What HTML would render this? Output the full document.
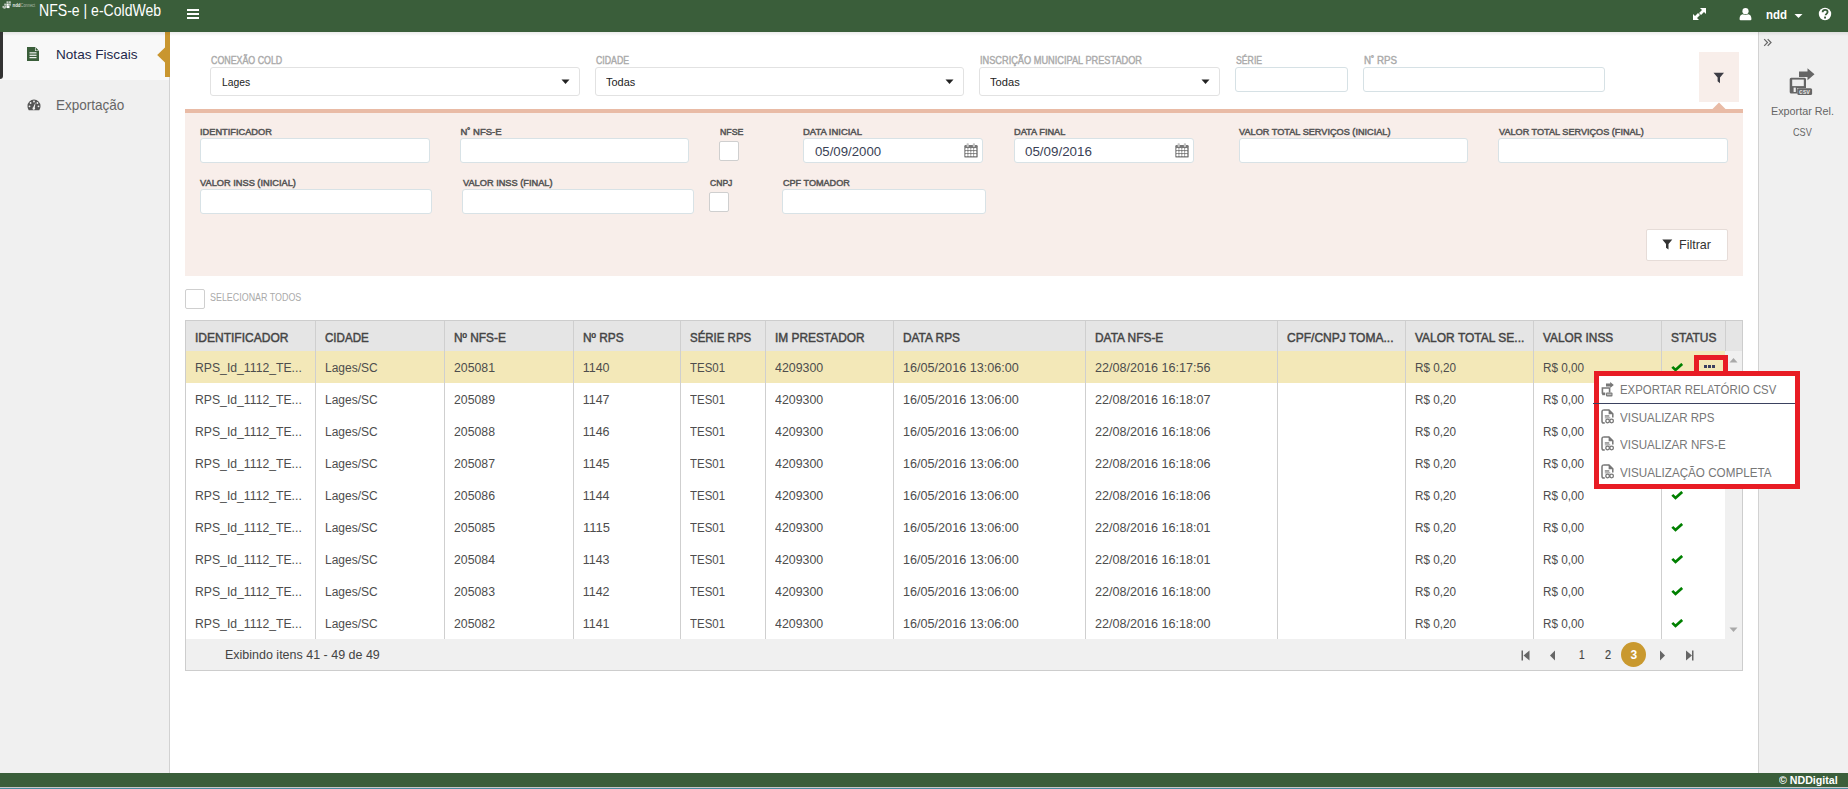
<!DOCTYPE html><html><head><meta charset="utf-8"><style>
html,body{margin:0;padding:0;}
body{width:1848px;height:789px;overflow:hidden;position:relative;background:#fff;font-family:"Liberation Sans",sans-serif;}
body>div,body>svg{position:absolute;}
.t{white-space:nowrap;transform-origin:0 0;}
</style></head><body><div style="left:0px;top:0px;width:1848px;height:32px;background:#3a5e3a"></div><div class="t" style="top:3px;left:38.60px;font-size:15.75px;line-height:15.75px;color:#fff;transform:scaleX(0.8929);">NFS-e | e-ColdWeb</div><div style="left:187px;top:9px;width:12px;height:2px;background:#fff"></div><div style="left:187px;top:13px;width:12px;height:2px;background:#fff"></div><div style="left:187px;top:17px;width:12px;height:2px;background:#fff"></div><svg style="left:2px;top:1px" width="34" height="8" viewBox="0 0 34 8"><g fill="#bfc9bf"><rect x="4.5" y="0.3" width="2" height="2"/><rect x="6.8" y="0.3" width="2" height="2"/><rect x="2.2" y="2.6" width="2" height="2"/><rect x="6.8" y="2.6" width="2" height="2"/><rect x="0.5" y="4.9" width="2" height="2"/><rect x="2.8" y="4.9" width="2" height="2"/><rect x="1.5" y="6.2" width="2" height="1.5"/></g><rect x="4.5" y="2.6" width="2.2" height="2.2" fill="#fff"/><rect x="5" y="4.9" width="2.5" height="2.2" fill="#fff"/><text x="10.5" y="5.8" font-size="5.2" fill="#e8ece8" font-family="Liberation Sans" font-weight="bold" textLength="8" lengthAdjust="spacingAndGlyphs">ndd</text><text x="18.6" y="5.8" font-size="5.2" fill="#aab8aa" font-family="Liberation Sans" textLength="14.5" lengthAdjust="spacingAndGlyphs">Connect</text></svg><svg style="left:1692px;top:7px" width="15" height="14" viewBox="0 0 15 14"><g fill="#fff"><path d="M8 1h6v6l-2-2-3 3-2-2 3-3z"/><path d="M1 7v6h6l-2-2 3-3-2-2-3 3z"/></g></svg><svg style="left:1739px;top:8px" width="13" height="13" viewBox="0 0 13 13"><g fill="#fff"><circle cx="6.5" cy="3.2" r="3.1"/><path d="M0.6 10.6c0-2.6 1.2-4 3.2-4.4 1.6 1 3.8 1 5.4 0 2 .4 3.2 1.8 3.2 4.4v.6a1 1 0 0 1-1 1H1.6a1 1 0 0 1-1-1z"/></g></svg><div class="t" style="top:8px;left:1766.00px;font-size:13.5px;line-height:13.5px;color:#fff;font-weight:bold;transform:scaleX(0.8486);">ndd</div><svg style="left:1794px;top:13px" width="9" height="6" viewBox="0 0 9 6"><path d="M0.5 1h8L4.5 5z" fill="#fff"/></svg><svg style="left:1818px;top:7px" width="14" height="14" viewBox="0 0 14 14"><circle cx="7" cy="7" r="6.2" fill="#fff"/><path d="M4.6 5.3c0-1.5 1-2.5 2.5-2.5s2.5 .9 2.5 2.2c0 1.8-2 1.9-2 3.3" stroke="#3a5e3a" stroke-width="1.8" fill="none"/><rect x="6.1" y="9.6" width="1.9" height="1.9" fill="#3a5e3a"/></svg><div style="left:0px;top:32px;width:169px;height:741px;background:#f0f0f0"></div><div style="left:169px;top:32px;width:1px;height:741px;background:#d2d2d2"></div><div style="left:0px;top:32px;width:169px;height:48px;background:#f8f8f8"></div><div style="left:0px;top:32px;width:3px;height:47px;background:#333;border-bottom-right-radius:3px"></div><div style="left:165px;top:32px;width:5px;height:45px;background:#c9962f"></div><svg style="left:156px;top:46px" width="10" height="18" viewBox="0 0 10 18"><path d="M10 0.5L1.2 9 10 17.5z" fill="#c9962f"/></svg><svg style="left:27px;top:47px" width="12" height="14" viewBox="0 0 12 14"><path d="M0 0h8l4 4v10H0z" fill="#3a5e3a"/><path d="M8 0v4h4z" fill="#f8f8f8"/><path d="M8.6 0.3L11.7 3.4H8.6z" fill="#3a5e3a"/><g fill="#fff"><rect x="2.5" y="5.3" width="7" height="1.1"/><rect x="2.5" y="7.7" width="7" height="1.1"/><rect x="2.5" y="10.1" width="7" height="1.1"/></g></svg><div class="t" style="top:48px;left:55.80px;font-size:13.5px;line-height:13.5px;color:#23284a;transform:scaleX(1.0060);">Notas Fiscais</div><svg style="left:27px;top:99px" width="14" height="12" viewBox="0 0 14 12"><path d="M7 0.5A6.5 6.5 0 0 0 0.5 7c0 1.6.5 3 1.3 4.2h10.4c.8-1.2 1.3-2.6 1.3-4.2A6.5 6.5 0 0 0 7 .5z" fill="#555"/><g fill="#f0f0f0"><circle cx="7" cy="2.5" r="0.9"/><circle cx="3.6" cy="4" r="0.9"/><circle cx="10.4" cy="4" r="0.9"/><circle cx="2.5" cy="7.3" r="0.9"/><circle cx="11.5" cy="7.3" r="0.9"/><path d="M8.6 3.3L7.8 8.6a1.3 1.3 0 1 1-1.6-.3z"/></g></svg><div class="t" style="top:99px;left:55.80px;font-size:13.75px;line-height:13.75px;color:#666;transform:scaleX(0.9833);">Exportação</div><div style="left:1758px;top:32px;width:90px;height:741px;background:#f0f0f0"></div><div style="left:1758px;top:32px;width:1px;height:741px;background:#d2d2d2"></div><svg style="left:1763px;top:38px" width="10" height="10" viewBox="0 0 10 10"><path d="M1.2 1.2l3.3 3.3-3.3 3.3M4.7 1.2l3.3 3.3-3.3 3.3" stroke="#666" stroke-width="1.2" fill="none"/></svg><svg style="left:1789px;top:68px" width="27" height="28" viewBox="1789 68 27 28"><g fill="#666"><path d="M1799 71.5h8.5V68.2l7 6.05-7 6.05V77H1799z"/><path d="M1791.2 77.8h13.3a1.5 1.5 0 0 1 1.5 1.5v8.8h-8.7v5.3h-6.1a1.5 1.5 0 0 1-1.5-1.5V79.3a1.5 1.5 0 0 1 1.5-1.5z"/><rect x="1797.3" y="88.3" width="14.8" height="6.6" rx="1.5"/></g><g fill="#f0f0f0"><rect x="1792.2" y="79.6" width="11.6" height="6.5"/><rect x="1793.6" y="87.6" width="2.2" height="4.4"/></g><text x="1799" y="94" font-size="7" fill="#e0e0e0" font-family="Liberation Sans" font-weight="bold" textLength="11" lengthAdjust="spacingAndGlyphs">csv</text></svg><div class="t" style="top:106px;left:1770.70px;font-size:11.0px;line-height:11.0px;color:#666;transform:scaleX(0.9815);">Exportar Rel.</div><div class="t" style="top:127px;left:1792.90px;font-size:11.0px;line-height:11.0px;color:#666;transform:scaleX(0.8268);">CSV</div><div style="left:0px;top:773px;width:1848px;height:14px;background:#3a5e3a"></div><div style="left:0px;top:787px;width:1848px;height:1px;background:#c8c8c8"></div><div style="left:0px;top:788px;width:1848px;height:1px;background:#4a8ca0"></div><div class="t" style="top:775px;left:1779.30px;font-size:11.0px;line-height:11.0px;color:#fff;font-weight:bold;transform:scaleX(0.9676);">© NDDigital</div><div style="left:210px;top:67px;width:370px;height:29px;background:#fff;border:1px solid #e2e2e2;border-radius:3px;box-sizing:border-box"></div><div class="t" style="top:56px;left:210.50px;font-size:10.0px;line-height:10.0px;color:#aaa;transform:scaleX(0.8837);-webkit-text-stroke:0.4px #aaa;">CONEXÃO COLD</div><div class="t" style="top:76px;left:221.50px;font-size:11.75px;line-height:11.75px;color:#222;transform:scaleX(0.8807);">Lages</div><svg style="left:561px;top:79px" width="9" height="6" viewBox="0 0 9 6"><path d="M0.5 0.5h8L4.5 5z" fill="#222"/></svg><div style="left:595px;top:67px;width:369px;height:29px;background:#fff;border:1px solid #e2e2e2;border-radius:3px;box-sizing:border-box"></div><div class="t" style="top:56px;left:595.50px;font-size:10.0px;line-height:10.0px;color:#aaa;transform:scaleX(0.8761);-webkit-text-stroke:0.4px #aaa;">CIDADE</div><div class="t" style="top:76px;left:606.00px;font-size:11.75px;line-height:11.75px;color:#222;transform:scaleX(0.9314);">Todas</div><svg style="left:945px;top:79px" width="9" height="6" viewBox="0 0 9 6"><path d="M0.5 0.5h8L4.5 5z" fill="#222"/></svg><div style="left:979px;top:67px;width:241px;height:29px;background:#fff;border:1px solid #e2e2e2;border-radius:3px;box-sizing:border-box"></div><div class="t" style="top:56px;left:979.50px;font-size:10.0px;line-height:10.0px;color:#aaa;transform:scaleX(0.9207);-webkit-text-stroke:0.4px #aaa;">INSCRIÇÃO MUNICIPAL PRESTADOR</div><div class="t" style="top:76px;left:990.00px;font-size:11.75px;line-height:11.75px;color:#222;transform:scaleX(0.9474);">Todas</div><svg style="left:1201px;top:79px" width="9" height="6" viewBox="0 0 9 6"><path d="M0.5 0.5h8L4.5 5z" fill="#222"/></svg><div style="left:1235px;top:67px;width:113px;height:25px;background:#fff;border:1px solid #d6e1e5;border-radius:3px;box-sizing:border-box"></div><div class="t" style="top:56px;left:1235.70px;font-size:10.0px;line-height:10.0px;color:#aaa;transform:scaleX(0.8697);-webkit-text-stroke:0.4px #aaa;">SÉRIE</div><div style="left:1363px;top:67px;width:242px;height:25px;background:#fff;border:1px solid #d6e1e5;border-radius:3px;box-sizing:border-box"></div><div class="t" style="top:56px;left:1363.90px;font-size:10.0px;line-height:10.0px;color:#aaa;transform:scaleX(0.9767);-webkit-text-stroke:0.4px #aaa;">N˚ RPS</div><div style="left:1699px;top:52px;width:40px;height:50px;background:#f8eeea"></div><svg style="left:1713px;top:72px" width="12" height="12" viewBox="0 0 12 12"><path d="M0.5 0.8h10.5L7 5.5v5.7L4.6 9.3V5.5z" fill="#3d3d45"/></svg><svg style="left:1712px;top:102px" width="14" height="8" viewBox="0 0 14 8"><path d="M0 7.5L7 0.5 14 7.5z" fill="#e9bba6"/></svg><div style="left:185px;top:109px;width:1558px;height:167px;background:#f8eeea"></div><div style="left:185px;top:109px;width:1558px;height:4px;background:#e9bba6"></div><div class="t" style="top:127px;left:200.30px;font-size:9.5px;line-height:9.5px;color:#555;transform:scaleX(0.9731);-webkit-text-stroke:0.5px #555;">IDENTIFICADOR</div><div style="left:200px;top:138px;width:230px;height:25px;background:#fff;border:1px solid #d8e2e6;border-radius:3px;box-sizing:border-box"></div><div class="t" style="top:127px;left:460.40px;font-size:9.5px;line-height:9.5px;color:#555;-webkit-text-stroke:0.5px #555;">N˚ NFS-E</div><div style="left:460px;top:138px;width:229px;height:25px;background:#fff;border:1px solid #d8e2e6;border-radius:3px;box-sizing:border-box"></div><div class="t" style="top:127px;left:719.50px;font-size:9.5px;line-height:9.5px;color:#555;transform:scaleX(0.9275);-webkit-text-stroke:0.5px #555;">NFSE</div><div style="left:719px;top:141px;width:20px;height:20px;background:#fff;border:1px solid #cfcfcf;border-radius:2px;box-sizing:border-box"></div><div class="t" style="top:127px;left:803.40px;font-size:9.5px;line-height:9.5px;color:#555;transform:scaleX(0.9933);-webkit-text-stroke:0.5px #555;">DATA INICIAL</div><div style="left:803px;top:138px;width:180px;height:25px;background:#fff;border:1px solid #d8e2e6;border-radius:3px;box-sizing:border-box"></div><div class="t" style="top:127px;left:1014.40px;font-size:9.5px;line-height:9.5px;color:#555;transform:scaleX(0.9705);-webkit-text-stroke:0.5px #555;">DATA FINAL</div><div style="left:1014px;top:138px;width:180px;height:25px;background:#fff;border:1px solid #d8e2e6;border-radius:3px;box-sizing:border-box"></div><div class="t" style="top:127px;left:1238.80px;font-size:9.5px;line-height:9.5px;color:#555;transform:scaleX(0.9641);-webkit-text-stroke:0.5px #555;">VALOR TOTAL SERVIÇOS (INICIAL)</div><div style="left:1239px;top:138px;width:229px;height:25px;background:#fff;border:1px solid #d8e2e6;border-radius:3px;box-sizing:border-box"></div><div class="t" style="top:127px;left:1498.60px;font-size:9.5px;line-height:9.5px;color:#555;transform:scaleX(0.9595);-webkit-text-stroke:0.5px #555;">VALOR TOTAL SERVIÇOS (FINAL)</div><div style="left:1498px;top:138px;width:230px;height:25px;background:#fff;border:1px solid #d8e2e6;border-radius:3px;box-sizing:border-box"></div><div class="t" style="top:178px;left:200.30px;font-size:9.5px;line-height:9.5px;color:#555;transform:scaleX(0.9732);-webkit-text-stroke:0.5px #555;">VALOR INSS (INICIAL)</div><div style="left:200px;top:189px;width:232px;height:25px;background:#fff;border:1px solid #d8e2e6;border-radius:3px;box-sizing:border-box"></div><div class="t" style="top:178px;left:462.50px;font-size:9.5px;line-height:9.5px;color:#555;transform:scaleX(0.9706);-webkit-text-stroke:0.5px #555;">VALOR INSS (FINAL)</div><div style="left:462px;top:189px;width:232px;height:25px;background:#fff;border:1px solid #d8e2e6;border-radius:3px;box-sizing:border-box"></div><div class="t" style="top:178px;left:709.70px;font-size:9.5px;line-height:9.5px;color:#555;transform:scaleX(0.9031);-webkit-text-stroke:0.5px #555;">CNPJ</div><div style="left:709px;top:192px;width:20px;height:20px;background:#fff;border:1px solid #cfcfcf;border-radius:2px;box-sizing:border-box"></div><div class="t" style="top:178px;left:782.60px;font-size:9.5px;line-height:9.5px;color:#555;transform:scaleX(0.9563);-webkit-text-stroke:0.5px #555;">CPF TOMADOR</div><div style="left:782px;top:189px;width:204px;height:25px;background:#fff;border:1px solid #d8e2e6;border-radius:3px;box-sizing:border-box"></div><div class="t" style="top:145px;left:814.90px;font-size:13.0px;line-height:13.0px;color:#3a3f55;transform:scaleX(1.0159);">05/09/2000</div><div class="t" style="top:145px;left:1024.60px;font-size:13.0px;line-height:13.0px;color:#3a3f55;transform:scaleX(1.0282);">05/09/2016</div><svg style="left:964px;top:143px" width="14" height="15" viewBox="0 0 14 15"><rect x="0.3" y="2" width="13.4" height="12.6" rx="1.2" fill="#787878"/><rect x="1.3" y="5.1" width="2.4" height="2.2" rx="0.8" fill="#fff"/><rect x="1.3" y="8.1" width="2.4" height="2.2" rx="0.8" fill="#fff"/><rect x="1.3" y="11.0" width="2.4" height="2.2" rx="0.8" fill="#fff"/><rect x="4.2" y="5.1" width="2.4" height="2.2" rx="0.8" fill="#fff"/><rect x="4.2" y="8.1" width="2.4" height="2.2" rx="0.8" fill="#fff"/><rect x="4.2" y="11.0" width="2.4" height="2.2" rx="0.8" fill="#fff"/><rect x="7.1" y="5.1" width="2.4" height="2.2" rx="0.8" fill="#fff"/><rect x="7.1" y="8.1" width="2.4" height="2.2" rx="0.8" fill="#fff"/><rect x="7.1" y="11.0" width="2.4" height="2.2" rx="0.8" fill="#fff"/><rect x="10.0" y="5.1" width="2.4" height="2.2" rx="0.8" fill="#fff"/><rect x="10.0" y="8.1" width="2.4" height="2.2" rx="0.8" fill="#fff"/><rect x="10.0" y="11.0" width="2.4" height="2.2" rx="0.8" fill="#fff"/><rect x="2.6" y="0.3" width="2.2" height="3.6" rx="0.7" fill="#c4c4c4"/><rect x="8.8" y="0.3" width="2.2" height="3.6" rx="0.7" fill="#c4c4c4"/></svg><svg style="left:1175px;top:143px" width="14" height="15" viewBox="0 0 14 15"><rect x="0.3" y="2" width="13.4" height="12.6" rx="1.2" fill="#787878"/><rect x="1.3" y="5.1" width="2.4" height="2.2" rx="0.8" fill="#fff"/><rect x="1.3" y="8.1" width="2.4" height="2.2" rx="0.8" fill="#fff"/><rect x="1.3" y="11.0" width="2.4" height="2.2" rx="0.8" fill="#fff"/><rect x="4.2" y="5.1" width="2.4" height="2.2" rx="0.8" fill="#fff"/><rect x="4.2" y="8.1" width="2.4" height="2.2" rx="0.8" fill="#fff"/><rect x="4.2" y="11.0" width="2.4" height="2.2" rx="0.8" fill="#fff"/><rect x="7.1" y="5.1" width="2.4" height="2.2" rx="0.8" fill="#fff"/><rect x="7.1" y="8.1" width="2.4" height="2.2" rx="0.8" fill="#fff"/><rect x="7.1" y="11.0" width="2.4" height="2.2" rx="0.8" fill="#fff"/><rect x="10.0" y="5.1" width="2.4" height="2.2" rx="0.8" fill="#fff"/><rect x="10.0" y="8.1" width="2.4" height="2.2" rx="0.8" fill="#fff"/><rect x="10.0" y="11.0" width="2.4" height="2.2" rx="0.8" fill="#fff"/><rect x="2.6" y="0.3" width="2.2" height="3.6" rx="0.7" fill="#c4c4c4"/><rect x="8.8" y="0.3" width="2.2" height="3.6" rx="0.7" fill="#c4c4c4"/></svg><div style="left:1646px;top:229px;width:82px;height:32px;background:#fff;border:1px solid #e6dcd8;border-radius:2px;box-sizing:border-box"></div><svg style="left:1662px;top:239px" width="11" height="11" viewBox="0 0 11 11"><path d="M0.3 0.5h10L6.5 5v5.5L4 8.7V5z" fill="#333"/></svg><div class="t" style="top:239px;left:1678.80px;font-size:12.25px;line-height:12.25px;color:#333;transform:scaleX(1.0224);">Filtrar</div><div style="left:185px;top:289px;width:20px;height:20px;background:#fff;border:1px solid #cfcfcf;border-radius:2px;box-sizing:border-box"></div><div class="t" style="top:293px;left:210.40px;font-size:10.0px;line-height:10.0px;color:#aaa;transform:scaleX(0.8913);">SELECIONAR TODOS</div><div style="left:185px;top:320px;width:1558px;height:351px;background:#fff;border:1px solid #cdcdcd;box-sizing:border-box"></div><div style="left:186px;top:321px;width:1556px;height:30px;background:#e5e5e5"></div><div style="left:186px;top:351px;width:1539px;height:32px;background:#f3e8b8"></div><div style="left:1725px;top:351px;width:17px;height:288px;background:#f0f0f0"></div><div style="left:186px;top:639px;width:1556px;height:31px;background:#f0f0f0"></div><div style="left:315px;top:321px;width:1px;height:318px;background:#cfcfcf"></div><div style="left:444px;top:321px;width:1px;height:318px;background:#cfcfcf"></div><div style="left:573px;top:321px;width:1px;height:318px;background:#cfcfcf"></div><div style="left:680px;top:321px;width:1px;height:318px;background:#cfcfcf"></div><div style="left:765px;top:321px;width:1px;height:318px;background:#cfcfcf"></div><div style="left:893px;top:321px;width:1px;height:318px;background:#cfcfcf"></div><div style="left:1085px;top:321px;width:1px;height:318px;background:#cfcfcf"></div><div style="left:1277px;top:321px;width:1px;height:318px;background:#cfcfcf"></div><div style="left:1405px;top:321px;width:1px;height:318px;background:#cfcfcf"></div><div style="left:1533px;top:321px;width:1px;height:318px;background:#cfcfcf"></div><div style="left:1661px;top:321px;width:1px;height:318px;background:#cfcfcf"></div><div style="left:1725px;top:321px;width:1px;height:30px;background:#cfcfcf"></div><div class="t" style="top:332px;left:194.90px;font-size:12.5px;line-height:12.5px;color:#444;transform:scaleX(0.9607);-webkit-text-stroke:0.45px #444;">IDENTIFICADOR</div><div class="t" style="top:332px;left:324.90px;font-size:12.5px;line-height:12.5px;color:#444;transform:scaleX(0.9254);-webkit-text-stroke:0.45px #444;">CIDADE</div><div class="t" style="top:332px;left:453.70px;font-size:12.5px;line-height:12.5px;color:#444;transform:scaleX(0.9512);-webkit-text-stroke:0.45px #444;">Nº NFS-E</div><div class="t" style="top:332px;left:582.90px;font-size:12.5px;line-height:12.5px;color:#444;transform:scaleX(0.9518);-webkit-text-stroke:0.45px #444;">Nº RPS</div><div class="t" style="top:332px;left:689.80px;font-size:12.5px;line-height:12.5px;color:#444;transform:scaleX(0.9177);-webkit-text-stroke:0.45px #444;">SÉRIE RPS</div><div class="t" style="top:332px;left:774.70px;font-size:12.5px;line-height:12.5px;color:#444;transform:scaleX(0.9509);-webkit-text-stroke:0.45px #444;">IM PRESTADOR</div><div class="t" style="top:332px;left:902.70px;font-size:12.5px;line-height:12.5px;color:#444;transform:scaleX(0.9506);-webkit-text-stroke:0.45px #444;">DATA RPS</div><div class="t" style="top:332px;left:1094.70px;font-size:12.5px;line-height:12.5px;color:#444;transform:scaleX(0.9518);-webkit-text-stroke:0.45px #444;">DATA NFS-E</div><div class="t" style="top:332px;left:1286.90px;font-size:12.5px;line-height:12.5px;color:#444;transform:scaleX(0.9624);-webkit-text-stroke:0.45px #444;">CPF/CNPJ TOMA...</div><div class="t" style="top:332px;left:1414.70px;font-size:12.5px;line-height:12.5px;color:#444;transform:scaleX(0.9594);-webkit-text-stroke:0.45px #444;">VALOR TOTAL SE...</div><div class="t" style="top:332px;left:1542.70px;font-size:12.5px;line-height:12.5px;color:#444;transform:scaleX(0.9474);-webkit-text-stroke:0.45px #444;">VALOR INSS</div><div class="t" style="top:332px;left:1670.80px;font-size:12.5px;line-height:12.5px;color:#444;transform:scaleX(0.9568);-webkit-text-stroke:0.45px #444;">STATUS</div><div class="t" style="top:362px;left:194.70px;font-size:12.5px;line-height:12.5px;color:#4d4d4d;transform:scaleX(0.9769);">RPS_Id_1112_TE...</div><div class="t" style="top:362px;left:324.70px;font-size:12.5px;line-height:12.5px;color:#4d4d4d;transform:scaleX(0.9581);">Lages/SC</div><div class="t" style="top:362px;left:453.70px;font-size:12.5px;line-height:12.5px;color:#4d4d4d;transform:scaleX(0.9829);">205081</div><div class="t" style="top:362px;left:582.70px;font-size:12.5px;line-height:12.5px;color:#4d4d4d;">1140</div><div class="t" style="top:362px;left:689.70px;font-size:12.5px;line-height:12.5px;color:#4d4d4d;transform:scaleX(0.9159);">TES01</div><div class="t" style="top:362px;left:774.70px;font-size:12.5px;line-height:12.5px;color:#4d4d4d;transform:scaleX(0.9905);">4209300</div><div class="t" style="top:362px;left:902.70px;font-size:12.5px;line-height:12.5px;color:#4d4d4d;transform:scaleX(1.0097);">16/05/2016 13:06:00</div><div class="t" style="top:362px;left:1094.70px;font-size:12.5px;line-height:12.5px;color:#4d4d4d;transform:scaleX(1.0080);">22/08/2016 16:17:56</div><div class="t" style="top:362px;left:1414.70px;font-size:12.5px;line-height:12.5px;color:#4d4d4d;transform:scaleX(0.9366);">R$ 0,20</div><div class="t" style="top:362px;left:1542.70px;font-size:12.5px;line-height:12.5px;color:#4d4d4d;transform:scaleX(0.9389);">R$ 0,00</div><svg style="left:1671px;top:362.8px" width="13" height="9" viewBox="0 0 13 9"><path d="M1.3 3.9L4.5 7.0 11.2 0.9" stroke="#008000" stroke-width="2.7" fill="none"/></svg><div class="t" style="top:394px;left:194.70px;font-size:12.5px;line-height:12.5px;color:#4d4d4d;transform:scaleX(0.9769);">RPS_Id_1112_TE...</div><div class="t" style="top:394px;left:324.70px;font-size:12.5px;line-height:12.5px;color:#4d4d4d;transform:scaleX(0.9581);">Lages/SC</div><div class="t" style="top:394px;left:453.70px;font-size:12.5px;line-height:12.5px;color:#4d4d4d;transform:scaleX(0.9829);">205089</div><div class="t" style="top:394px;left:582.70px;font-size:12.5px;line-height:12.5px;color:#4d4d4d;">1147</div><div class="t" style="top:394px;left:689.70px;font-size:12.5px;line-height:12.5px;color:#4d4d4d;transform:scaleX(0.9159);">TES01</div><div class="t" style="top:394px;left:774.70px;font-size:12.5px;line-height:12.5px;color:#4d4d4d;transform:scaleX(0.9905);">4209300</div><div class="t" style="top:394px;left:902.70px;font-size:12.5px;line-height:12.5px;color:#4d4d4d;transform:scaleX(1.0097);">16/05/2016 13:06:00</div><div class="t" style="top:394px;left:1094.70px;font-size:12.5px;line-height:12.5px;color:#4d4d4d;transform:scaleX(1.0080);">22/08/2016 16:18:07</div><div class="t" style="top:394px;left:1414.70px;font-size:12.5px;line-height:12.5px;color:#4d4d4d;transform:scaleX(0.9366);">R$ 0,20</div><div class="t" style="top:394px;left:1542.70px;font-size:12.5px;line-height:12.5px;color:#4d4d4d;transform:scaleX(0.9389);">R$ 0,00</div><svg style="left:1671px;top:394.8px" width="13" height="9" viewBox="0 0 13 9"><path d="M1.3 3.9L4.5 7.0 11.2 0.9" stroke="#008000" stroke-width="2.7" fill="none"/></svg><div class="t" style="top:426px;left:194.70px;font-size:12.5px;line-height:12.5px;color:#4d4d4d;transform:scaleX(0.9769);">RPS_Id_1112_TE...</div><div class="t" style="top:426px;left:324.70px;font-size:12.5px;line-height:12.5px;color:#4d4d4d;transform:scaleX(0.9581);">Lages/SC</div><div class="t" style="top:426px;left:453.70px;font-size:12.5px;line-height:12.5px;color:#4d4d4d;transform:scaleX(0.9829);">205088</div><div class="t" style="top:426px;left:582.70px;font-size:12.5px;line-height:12.5px;color:#4d4d4d;">1146</div><div class="t" style="top:426px;left:689.70px;font-size:12.5px;line-height:12.5px;color:#4d4d4d;transform:scaleX(0.9159);">TES01</div><div class="t" style="top:426px;left:774.70px;font-size:12.5px;line-height:12.5px;color:#4d4d4d;transform:scaleX(0.9905);">4209300</div><div class="t" style="top:426px;left:902.70px;font-size:12.5px;line-height:12.5px;color:#4d4d4d;transform:scaleX(1.0097);">16/05/2016 13:06:00</div><div class="t" style="top:426px;left:1094.70px;font-size:12.5px;line-height:12.5px;color:#4d4d4d;transform:scaleX(1.0080);">22/08/2016 16:18:06</div><div class="t" style="top:426px;left:1414.70px;font-size:12.5px;line-height:12.5px;color:#4d4d4d;transform:scaleX(0.9366);">R$ 0,20</div><div class="t" style="top:426px;left:1542.70px;font-size:12.5px;line-height:12.5px;color:#4d4d4d;transform:scaleX(0.9389);">R$ 0,00</div><svg style="left:1671px;top:426.8px" width="13" height="9" viewBox="0 0 13 9"><path d="M1.3 3.9L4.5 7.0 11.2 0.9" stroke="#008000" stroke-width="2.7" fill="none"/></svg><div class="t" style="top:458px;left:194.70px;font-size:12.5px;line-height:12.5px;color:#4d4d4d;transform:scaleX(0.9769);">RPS_Id_1112_TE...</div><div class="t" style="top:458px;left:324.70px;font-size:12.5px;line-height:12.5px;color:#4d4d4d;transform:scaleX(0.9581);">Lages/SC</div><div class="t" style="top:458px;left:453.70px;font-size:12.5px;line-height:12.5px;color:#4d4d4d;transform:scaleX(0.9829);">205087</div><div class="t" style="top:458px;left:582.70px;font-size:12.5px;line-height:12.5px;color:#4d4d4d;">1145</div><div class="t" style="top:458px;left:689.70px;font-size:12.5px;line-height:12.5px;color:#4d4d4d;transform:scaleX(0.9159);">TES01</div><div class="t" style="top:458px;left:774.70px;font-size:12.5px;line-height:12.5px;color:#4d4d4d;transform:scaleX(0.9905);">4209300</div><div class="t" style="top:458px;left:902.70px;font-size:12.5px;line-height:12.5px;color:#4d4d4d;transform:scaleX(1.0097);">16/05/2016 13:06:00</div><div class="t" style="top:458px;left:1094.70px;font-size:12.5px;line-height:12.5px;color:#4d4d4d;transform:scaleX(1.0080);">22/08/2016 16:18:06</div><div class="t" style="top:458px;left:1414.70px;font-size:12.5px;line-height:12.5px;color:#4d4d4d;transform:scaleX(0.9366);">R$ 0,20</div><div class="t" style="top:458px;left:1542.70px;font-size:12.5px;line-height:12.5px;color:#4d4d4d;transform:scaleX(0.9389);">R$ 0,00</div><svg style="left:1671px;top:458.8px" width="13" height="9" viewBox="0 0 13 9"><path d="M1.3 3.9L4.5 7.0 11.2 0.9" stroke="#008000" stroke-width="2.7" fill="none"/></svg><div class="t" style="top:490px;left:194.70px;font-size:12.5px;line-height:12.5px;color:#4d4d4d;transform:scaleX(0.9769);">RPS_Id_1112_TE...</div><div class="t" style="top:490px;left:324.70px;font-size:12.5px;line-height:12.5px;color:#4d4d4d;transform:scaleX(0.9581);">Lages/SC</div><div class="t" style="top:490px;left:453.70px;font-size:12.5px;line-height:12.5px;color:#4d4d4d;transform:scaleX(0.9829);">205086</div><div class="t" style="top:490px;left:582.70px;font-size:12.5px;line-height:12.5px;color:#4d4d4d;">1144</div><div class="t" style="top:490px;left:689.70px;font-size:12.5px;line-height:12.5px;color:#4d4d4d;transform:scaleX(0.9159);">TES01</div><div class="t" style="top:490px;left:774.70px;font-size:12.5px;line-height:12.5px;color:#4d4d4d;transform:scaleX(0.9905);">4209300</div><div class="t" style="top:490px;left:902.70px;font-size:12.5px;line-height:12.5px;color:#4d4d4d;transform:scaleX(1.0097);">16/05/2016 13:06:00</div><div class="t" style="top:490px;left:1094.70px;font-size:12.5px;line-height:12.5px;color:#4d4d4d;transform:scaleX(1.0080);">22/08/2016 16:18:06</div><div class="t" style="top:490px;left:1414.70px;font-size:12.5px;line-height:12.5px;color:#4d4d4d;transform:scaleX(0.9366);">R$ 0,20</div><div class="t" style="top:490px;left:1542.70px;font-size:12.5px;line-height:12.5px;color:#4d4d4d;transform:scaleX(0.9389);">R$ 0,00</div><svg style="left:1671px;top:490.8px" width="13" height="9" viewBox="0 0 13 9"><path d="M1.3 3.9L4.5 7.0 11.2 0.9" stroke="#008000" stroke-width="2.7" fill="none"/></svg><div class="t" style="top:522px;left:194.70px;font-size:12.5px;line-height:12.5px;color:#4d4d4d;transform:scaleX(0.9769);">RPS_Id_1112_TE...</div><div class="t" style="top:522px;left:324.70px;font-size:12.5px;line-height:12.5px;color:#4d4d4d;transform:scaleX(0.9581);">Lages/SC</div><div class="t" style="top:522px;left:453.70px;font-size:12.5px;line-height:12.5px;color:#4d4d4d;transform:scaleX(0.9829);">205085</div><div class="t" style="top:522px;left:582.70px;font-size:12.5px;line-height:12.5px;color:#4d4d4d;transform:scaleX(1.0405);">1115</div><div class="t" style="top:522px;left:689.70px;font-size:12.5px;line-height:12.5px;color:#4d4d4d;transform:scaleX(0.9159);">TES01</div><div class="t" style="top:522px;left:774.70px;font-size:12.5px;line-height:12.5px;color:#4d4d4d;transform:scaleX(0.9905);">4209300</div><div class="t" style="top:522px;left:902.70px;font-size:12.5px;line-height:12.5px;color:#4d4d4d;transform:scaleX(1.0097);">16/05/2016 13:06:00</div><div class="t" style="top:522px;left:1094.70px;font-size:12.5px;line-height:12.5px;color:#4d4d4d;transform:scaleX(1.0080);">22/08/2016 16:18:01</div><div class="t" style="top:522px;left:1414.70px;font-size:12.5px;line-height:12.5px;color:#4d4d4d;transform:scaleX(0.9366);">R$ 0,20</div><div class="t" style="top:522px;left:1542.70px;font-size:12.5px;line-height:12.5px;color:#4d4d4d;transform:scaleX(0.9389);">R$ 0,00</div><svg style="left:1671px;top:522.8px" width="13" height="9" viewBox="0 0 13 9"><path d="M1.3 3.9L4.5 7.0 11.2 0.9" stroke="#008000" stroke-width="2.7" fill="none"/></svg><div class="t" style="top:554px;left:194.70px;font-size:12.5px;line-height:12.5px;color:#4d4d4d;transform:scaleX(0.9769);">RPS_Id_1112_TE...</div><div class="t" style="top:554px;left:324.70px;font-size:12.5px;line-height:12.5px;color:#4d4d4d;transform:scaleX(0.9581);">Lages/SC</div><div class="t" style="top:554px;left:453.70px;font-size:12.5px;line-height:12.5px;color:#4d4d4d;transform:scaleX(0.9829);">205084</div><div class="t" style="top:554px;left:582.70px;font-size:12.5px;line-height:12.5px;color:#4d4d4d;">1143</div><div class="t" style="top:554px;left:689.70px;font-size:12.5px;line-height:12.5px;color:#4d4d4d;transform:scaleX(0.9159);">TES01</div><div class="t" style="top:554px;left:774.70px;font-size:12.5px;line-height:12.5px;color:#4d4d4d;transform:scaleX(0.9905);">4209300</div><div class="t" style="top:554px;left:902.70px;font-size:12.5px;line-height:12.5px;color:#4d4d4d;transform:scaleX(1.0097);">16/05/2016 13:06:00</div><div class="t" style="top:554px;left:1094.70px;font-size:12.5px;line-height:12.5px;color:#4d4d4d;transform:scaleX(1.0080);">22/08/2016 16:18:01</div><div class="t" style="top:554px;left:1414.70px;font-size:12.5px;line-height:12.5px;color:#4d4d4d;transform:scaleX(0.9366);">R$ 0,20</div><div class="t" style="top:554px;left:1542.70px;font-size:12.5px;line-height:12.5px;color:#4d4d4d;transform:scaleX(0.9389);">R$ 0,00</div><svg style="left:1671px;top:554.8px" width="13" height="9" viewBox="0 0 13 9"><path d="M1.3 3.9L4.5 7.0 11.2 0.9" stroke="#008000" stroke-width="2.7" fill="none"/></svg><div class="t" style="top:586px;left:194.70px;font-size:12.5px;line-height:12.5px;color:#4d4d4d;transform:scaleX(0.9769);">RPS_Id_1112_TE...</div><div class="t" style="top:586px;left:324.70px;font-size:12.5px;line-height:12.5px;color:#4d4d4d;transform:scaleX(0.9581);">Lages/SC</div><div class="t" style="top:586px;left:453.70px;font-size:12.5px;line-height:12.5px;color:#4d4d4d;transform:scaleX(0.9829);">205083</div><div class="t" style="top:586px;left:582.70px;font-size:12.5px;line-height:12.5px;color:#4d4d4d;">1142</div><div class="t" style="top:586px;left:689.70px;font-size:12.5px;line-height:12.5px;color:#4d4d4d;transform:scaleX(0.9159);">TES01</div><div class="t" style="top:586px;left:774.70px;font-size:12.5px;line-height:12.5px;color:#4d4d4d;transform:scaleX(0.9905);">4209300</div><div class="t" style="top:586px;left:902.70px;font-size:12.5px;line-height:12.5px;color:#4d4d4d;transform:scaleX(1.0097);">16/05/2016 13:06:00</div><div class="t" style="top:586px;left:1094.70px;font-size:12.5px;line-height:12.5px;color:#4d4d4d;transform:scaleX(1.0080);">22/08/2016 16:18:00</div><div class="t" style="top:586px;left:1414.70px;font-size:12.5px;line-height:12.5px;color:#4d4d4d;transform:scaleX(0.9366);">R$ 0,20</div><div class="t" style="top:586px;left:1542.70px;font-size:12.5px;line-height:12.5px;color:#4d4d4d;transform:scaleX(0.9389);">R$ 0,00</div><svg style="left:1671px;top:586.8px" width="13" height="9" viewBox="0 0 13 9"><path d="M1.3 3.9L4.5 7.0 11.2 0.9" stroke="#008000" stroke-width="2.7" fill="none"/></svg><div class="t" style="top:618px;left:194.70px;font-size:12.5px;line-height:12.5px;color:#4d4d4d;transform:scaleX(0.9769);">RPS_Id_1112_TE...</div><div class="t" style="top:618px;left:324.70px;font-size:12.5px;line-height:12.5px;color:#4d4d4d;transform:scaleX(0.9581);">Lages/SC</div><div class="t" style="top:618px;left:453.70px;font-size:12.5px;line-height:12.5px;color:#4d4d4d;transform:scaleX(0.9829);">205082</div><div class="t" style="top:618px;left:582.70px;font-size:12.5px;line-height:12.5px;color:#4d4d4d;">1141</div><div class="t" style="top:618px;left:689.70px;font-size:12.5px;line-height:12.5px;color:#4d4d4d;transform:scaleX(0.9159);">TES01</div><div class="t" style="top:618px;left:774.70px;font-size:12.5px;line-height:12.5px;color:#4d4d4d;transform:scaleX(0.9905);">4209300</div><div class="t" style="top:618px;left:902.70px;font-size:12.5px;line-height:12.5px;color:#4d4d4d;transform:scaleX(1.0097);">16/05/2016 13:06:00</div><div class="t" style="top:618px;left:1094.70px;font-size:12.5px;line-height:12.5px;color:#4d4d4d;transform:scaleX(1.0080);">22/08/2016 16:18:00</div><div class="t" style="top:618px;left:1414.70px;font-size:12.5px;line-height:12.5px;color:#4d4d4d;transform:scaleX(0.9366);">R$ 0,20</div><div class="t" style="top:618px;left:1542.70px;font-size:12.5px;line-height:12.5px;color:#4d4d4d;transform:scaleX(0.9389);">R$ 0,00</div><svg style="left:1671px;top:618.8px" width="13" height="9" viewBox="0 0 13 9"><path d="M1.3 3.9L4.5 7.0 11.2 0.9" stroke="#008000" stroke-width="2.7" fill="none"/></svg><svg style="left:1729px;top:357px" width="9" height="6" viewBox="0 0 9 6"><path d="M0.5 5.5L4.5 1 8.5 5.5z" fill="#a8a8a8"/></svg><svg style="left:1729px;top:627px" width="9" height="6" viewBox="0 0 9 6"><path d="M0.5 0.5L4.5 5 8.5 0.5z" fill="#a8a8a8"/></svg><div class="t" style="top:649px;left:225.20px;font-size:12.75px;line-height:12.75px;color:#444;transform:scaleX(0.9793);">Exibindo itens 41 - 49 de 49</div><svg style="left:1521px;top:650px" width="9" height="11" viewBox="0 0 9 11"><rect x="0.5" y="0.5" width="1.5" height="10" fill="#666"/><path d="M8.5 0.5v10L2.5 5.5z" fill="#666"/></svg><svg style="left:1549px;top:650px" width="7" height="11" viewBox="0 0 7 11"><path d="M6 0.5v10L1 5.5z" fill="#666"/></svg><div class="t" style="top:649px;left:1579.00px;font-size:12.0px;line-height:12.0px;color:#444;transform:scaleX(0.8393);-webkit-text-stroke:0.2px #444;">1</div><div class="t" style="top:649px;left:1604.90px;font-size:12.0px;line-height:12.0px;color:#444;transform:scaleX(0.9143);-webkit-text-stroke:0.2px #444;">2</div><div style="left:1621px;top:642px;width:25px;height:25px;background:#c9992f;border-radius:50%"></div><div class="t" style="top:649px;left:1630.50px;font-size:12.0px;line-height:12.0px;color:#fff;font-weight:bold;">3</div><svg style="left:1659px;top:650px" width="7" height="11" viewBox="0 0 7 11"><path d="M1 0.5v10L6 5.5z" fill="#666"/></svg><svg style="left:1685px;top:650px" width="9" height="11" viewBox="0 0 9 11"><path d="M1 0.5v10L7 5.5z" fill="#666"/><rect x="7" y="0.5" width="1.5" height="10" fill="#666"/></svg><div style="left:1694px;top:355px;width:34px;height:21px;border:5px solid #e81c24;box-sizing:border-box;background:#f3e8b8"></div><div style="left:1704px;top:365px;width:3px;height:3px;background:#3b3f60"></div><div style="left:1708px;top:365px;width:3px;height:3px;background:#3b3f60"></div><div style="left:1712px;top:365px;width:3px;height:3px;background:#3b3f60"></div><div style="left:1594px;top:371px;width:206px;height:118px;border:5px solid #e81c24;box-sizing:border-box;background:#fff"></div><div style="left:1593px;top:403px;width:202px;height:1px;background:#3b4260"></div><div class="t" style="top:383px;left:1620.30px;font-size:13.0px;line-height:13.0px;color:#777;transform:scaleX(0.8760);">EXPORTAR RELATÓRIO CSV</div><div class="t" style="top:411px;left:1619.70px;font-size:13.0px;line-height:13.0px;color:#777;transform:scaleX(0.8899);">VISUALIZAR RPS</div><div class="t" style="top:438px;left:1619.70px;font-size:13.0px;line-height:13.0px;color:#777;transform:scaleX(0.8922);">VISUALIZAR NFS-E</div><div class="t" style="top:466px;left:1619.70px;font-size:13.0px;line-height:13.0px;color:#777;transform:scaleX(0.8976);">VISUALIZAÇÃO COMPLETA</div><svg style="left:1600px;top:382px" width="15" height="15" viewBox="0 0 15 15"><g fill="#777"><path d="M6 1.6h4.2V0l3.6 3-3.6 3V4.4H6z"/><path d="M1.6 5.2h7.8a1 1 0 0 1 1 1v4.2h-1.6V6.8H3.2v3.8h2v1.6H2.6a1 1 0 0 1-1-1z"/><rect x="2.2" y="11.6" width="3" height="1.6"/><rect x="6" y="10.4" width="6.5" height="4" rx="1"/></g><g fill="#bbb"><rect x="7" y="11.6" width="4.5" height="1.6"/></g></svg><svg style="left:1601px;top:409px" width="14" height="15" viewBox="0 0 14 15"><path d="M2.8 1h5.2l3.8 3.8V8.5" stroke="#777" stroke-width="1.5" fill="none"/><path d="M2.8 1A1.8 1.8 0 0 0 1 2.8v9.4a1.8 1.8 0 0 0 1.8 1.8h1" stroke="#777" stroke-width="1.5" fill="none"/><path d="M7.6 0.5l4.7 4.7H7.6z" fill="#777"/><rect x="3.8" y="6.3" width="4.5" height="1.3" fill="#777"/><rect x="3.8" y="8.3" width="5.5" height="1.1" fill="#999"/><g fill="none" stroke="#777" stroke-width="1.3"><circle cx="6.6" cy="12" r="1.8"/><circle cx="10.6" cy="12" r="1.8"/></g></svg><svg style="left:1601px;top:436px" width="14" height="15" viewBox="0 0 14 15"><path d="M2.8 1h5.2l3.8 3.8V8.5" stroke="#777" stroke-width="1.5" fill="none"/><path d="M2.8 1A1.8 1.8 0 0 0 1 2.8v9.4a1.8 1.8 0 0 0 1.8 1.8h1" stroke="#777" stroke-width="1.5" fill="none"/><path d="M7.6 0.5l4.7 4.7H7.6z" fill="#777"/><rect x="3.8" y="6.3" width="4.5" height="1.3" fill="#777"/><rect x="3.8" y="8.3" width="5.5" height="1.1" fill="#999"/><g fill="none" stroke="#777" stroke-width="1.3"><circle cx="6.6" cy="12" r="1.8"/><circle cx="10.6" cy="12" r="1.8"/></g></svg><svg style="left:1601px;top:464px" width="14" height="15" viewBox="0 0 14 15"><path d="M2.8 1h5.2l3.8 3.8V8.5" stroke="#777" stroke-width="1.5" fill="none"/><path d="M2.8 1A1.8 1.8 0 0 0 1 2.8v9.4a1.8 1.8 0 0 0 1.8 1.8h1" stroke="#777" stroke-width="1.5" fill="none"/><path d="M7.6 0.5l4.7 4.7H7.6z" fill="#777"/><rect x="3.8" y="6.3" width="4.5" height="1.3" fill="#777"/><rect x="3.8" y="8.3" width="5.5" height="1.1" fill="#999"/><g fill="none" stroke="#777" stroke-width="1.3"><circle cx="6.6" cy="12" r="1.8"/><circle cx="10.6" cy="12" r="1.8"/></g></svg><div style="left:0px;top:32px;width:1848px;height:4px;background:linear-gradient(rgba(0,0,0,0.08),rgba(0,0,0,0))"></div></body></html>
